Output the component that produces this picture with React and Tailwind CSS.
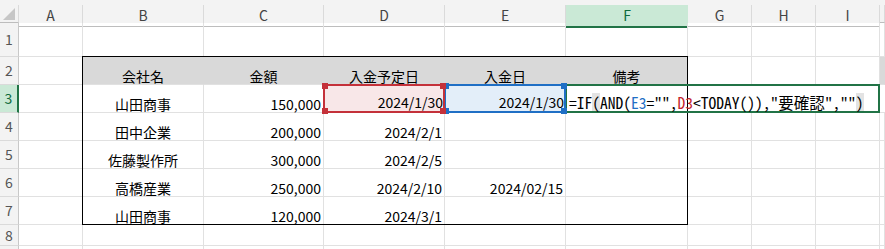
const COLS = ["A", "B", "C", "D", "E", "F", "G", "H", "I", ""]

// full class names so Tailwind picks them up
const COL_START = [
  "col-start-1", "col-start-2", "col-start-3", "col-start-4", "col-start-5", "col-start-6",
  "col-start-7", "col-start-8", "col-start-9", "col-start-10", "col-start-11",
]
const ROW_START = [
  "row-start-1", "row-start-2", "row-start-3", "row-start-4", "row-start-5",
  "row-start-6", "row-start-7", "row-start-8", "row-start-9", "row-start-10",
]

// D3 / E3 are drawn by their reference highlights below
const DATA = {
  2: { B: "会社名", C: "金額", D: "入金予定日", E: "入金日", F: "備考" },
  3: { B: "山田商事", C: "150,000" },
  4: { B: "田中企業", C: "200,000", D: "2024/2/1" },
  5: { B: "佐藤製作所", C: "300,000", D: "2024/2/5" },
  6: { B: "高橋産業", C: "250,000", D: "2024/2/10", E: "2024/02/15" },
  7: { B: "山田商事", C: "120,000", D: "2024/3/1" },
}

const ACTIVE_COL = "F"
const ACTIVE_ROW = 3

function Corner() {
  return (
    <div className="col-start-1 row-start-1 flex flex-col bg-[#f3f3f3] pt-[5px]">
      <div className="flex-1 border-r border-b border-r-[#dadada] border-b-[#bdbdbd] relative">
        <svg className="absolute left-[3px] top-[3px]" width="12" height="12" viewBox="0 0 12 12">
          <polygon points="12,0 12,12 0,12" fill="#c6c6c6" />
        </svg>
      </div>
    </div>
  )
}

function ColHeader({ label, index }) {
  const active = label === ACTIVE_COL
  return (
    <div className={`${COL_START[index + 1]} row-start-1 flex flex-col bg-[#f3f3f3] pt-[5px]`}>
      <div
        className={
          active
            ? "flex-1 flex items-center justify-center bg-[#cae9d6] border-b-2 border-b-[#217346] text-[#0e6b3c]"
            : "flex-1 flex items-center justify-center border-r border-b border-r-[#dadada] border-b-[#bdbdbd] text-[#444]"
        }
      >
        {label}
      </div>
    </div>
  )
}

function RowHeader({ row }) {
  const active = row === ACTIVE_ROW
  return (
    <div
      className={`col-start-1 ${ROW_START[row]} flex items-center justify-center border-b border-[#dadada] ${
        active ? "bg-[#cae9d6] border-r-2 border-r-[#217346] text-[#0e6b3c]" : "bg-[#f3f3f3] border-r border-r-[#c8c8c8] text-[#555]"
      }`}
    >
      {row < 9 ? row : ""}
    </div>
  )
}

function Cell({ row, col, index }) {
  const text = DATA[row]?.[col] ?? ""
  const inHead = row === 2 && "BCDEF".includes(col)
  // formula in F3 spills over G3 and H3, so those lose their right edge
  const noRight = row === 3 && "FGH".includes(col)
  const align = inHead || col === "B" ? "justify-center" : "justify-end pr-[2px]"

  let edge = "border-r border-r-[#e1e1e1]"
  if (inHead) edge = "border-r border-r-[#d9d9d9]"
  if (noRight) edge = ""

  return (
    <div
      className={`${COL_START[index + 1]} ${ROW_START[row]} flex items-end ${align} whitespace-nowrap leading-[16px] border-b border-b-[#e1e1e1] ${edge} ${
        inHead ? "bg-[#d9d9d9]" : ""
      }`}
    >
      {text}
    </div>
  )
}

function Handles({ color }) {
  return (
    <>
      <span className={`absolute -left-[3px] -top-[3px] w-[6px] h-[6px] ${color}`} />
      <span className={`absolute -right-[3px] -top-[3px] w-[6px] h-[6px] ${color}`} />
      <span className={`absolute -left-[3px] -bottom-[3px] w-[6px] h-[6px] ${color}`} />
      <span className={`absolute -right-[3px] -bottom-[3px] w-[6px] h-[6px] ${color}`} />
    </>
  )
}

function Formula() {
  return (
    <div className="col-start-7 col-end-11 row-start-4 -ml-px -mt-px border-2 border-[#217346] flex items-end pl-[2px] whitespace-nowrap leading-[18px] text-[15.5px] font-['Noto_Sans_Mono_CJK_JP','Liberation_Mono',monospace]">
      <span>=IF</span>
      <span className="bg-[#e3e3e3]">(</span>
      <span>AND(</span>
      <span className="text-[#1f6fc5]">E3</span>
      <span>="",</span>
      <span className="text-[#c4262e]">D3</span>
      <span>&lt;TODAY()),"要確認",""</span>
      <span className="bg-[#e3e3e3]">)</span>
    </div>
  )
}

export default function App() {
  const rows = [1, 2, 3, 4, 5, 6, 7, 8, 9]
  return (
    <div className="w-[885px] h-[249px] overflow-hidden bg-white text-black font-['Noto_Sans_CJK_JP',sans-serif] text-[14px]">
      <div className="grid grid-cols-[19px_64px_121px_120px_121px_121px_122px_64px_64px_64px_1fr] grid-rows-[23px_34px_28px_28px_28px_28px_28px_28px_21px_28px]">
        <Corner />
        {COLS.map((c, i) => (
          <ColHeader key={`h${i}`} label={c} index={i} />
        ))}

        {rows.map((r) => (
          <RowHeader key={`r${r}`} row={r} />
        ))}

        {rows.map((r) =>
          COLS.map((c, i) => <Cell key={`${r}-${i}`} row={r} col={c} index={i} />)
        )}

        {/* table outline B2:F7 */}
        <div className="col-start-3 col-end-8 row-start-3 row-end-9 -ml-px -mt-px border border-black" />

        {/* formula being edited in F3, with its range references */}
        <Formula />
        <div className="col-start-6 row-start-4 -ml-px -mt-px relative border-2 border-[#1f6fc5] bg-[#e3eef9] flex items-end justify-end leading-[16px] whitespace-nowrap">
          <span className="pb-[1px]">2024/1/30</span>
          <Handles color="bg-[#1f6fc5]" />
        </div>
        <div className="col-start-5 row-start-4 -ml-px -mt-px relative border-2 border-[#c4313a] bg-[#f8e7e8] flex items-end justify-end leading-[16px] whitespace-nowrap">
          <span className="pb-[1px]">2024/1/30</span>
          <Handles color="bg-[#c4313a]" />
        </div>
      </div>
    </div>
  )
}
